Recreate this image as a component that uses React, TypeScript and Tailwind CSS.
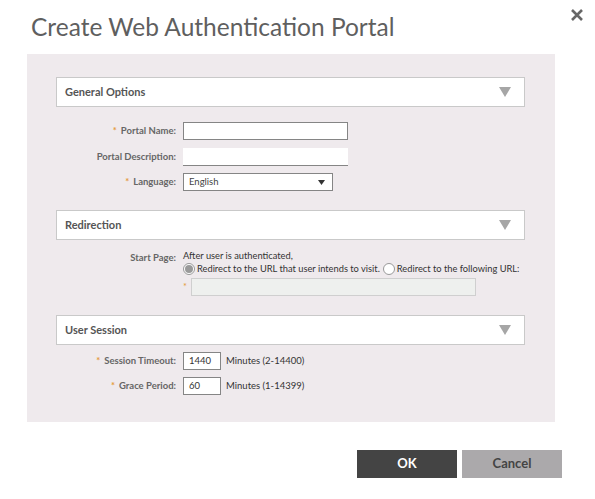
import { ReactNode } from 'react'

function SectionHeader({ title }: { title: string }) {
  return (
    <div className="flex h-[30px] items-center justify-between border border-[#c9c9c9] bg-white pl-[8px] pr-[13px]">
      <span className="text-[11px] font-bold text-[#555]">{title}</span>
      <svg width="12" height="10" viewBox="0 0 12 10">
        <polygon points="0,0 12,0 6,10" fill="#a6a6a6" />
      </svg>
    </div>
  )
}

function Req() {
  return <span className="mr-[4px] text-[#e59a3c]">*</span>
}

function Row({ label, required, children, className }: { label: string; required?: boolean; children: ReactNode; className?: string }) {
  return (
    <div className={`flex items-center ${className ?? ''}`}>
      <div className="w-[120px] shrink-0 text-right text-[9.5px] font-bold text-[#666]">
        {required && <Req />}
        {label}
      </div>
      <div className="ml-[7px] flex items-center">{children}</div>
    </div>
  )
}

function Radio({ checked }: { checked?: boolean }) {
  return (
    <span className="flex h-[12px] w-[12px] shrink-0 items-center justify-center rounded-full border border-[#999] bg-white">
      {checked && <span className="h-[8px] w-[8px] rounded-full bg-[#9a9a9a]" />}
    </span>
  )
}

export default function App() {
  return (
    <div className="relative h-[499px] w-[595px] bg-white font-['Lato',sans-serif] text-[#333]">
      <h1 className="pl-[31px] pt-[11px] text-[24.5px] leading-[32px] text-[#5f5f5f]">Create Web Authentication Portal</h1>
      <button className="absolute right-[11px] top-[8px] text-[#666]">
        <svg width="14" height="14" viewBox="0 0 14 14">
          <path d="M2 2 L12 12 M12 2 L2 12" stroke="#666" strokeWidth="2.6" />
        </svg>
      </button>

      <div className="ml-[27px] mt-[11px] h-[368px] w-[528px] bg-[#efeaed] pl-[29px] pr-[30px] pt-[23px]">
        <SectionHeader title="General Options" />
        <Row label="Portal Name:" required className="mt-[15px]">
          <div className="h-[18px] w-[165px] border border-[#858585] bg-white" />
        </Row>
        <Row label="Portal Description:" className="mt-[8px]">
          <div className="h-[18px] w-[165px] border-b border-[#858585] bg-white" />
        </Row>
        <Row label="Language:" required className="mt-[7px]">
          <div className="flex h-[18px] w-[150px] items-center justify-between border border-[#858585] bg-white pl-[5px] pr-[7px] text-[9.5px] text-[#444]">
            <span>English</span>
            <svg width="7" height="5" viewBox="0 0 7 5">
              <polygon points="0,0 7,0 3.5,5" fill="#333" />
            </svg>
          </div>
        </Row>

        <div className="mt-[19px]">
          <SectionHeader title="Redirection" />
        </div>
        <div className="mt-[10px] flex">
          <div className="w-[120px] shrink-0 pt-[1px] text-right text-[9.5px] font-bold text-[#666]">Start Page:</div>
          <div className="ml-[7px] whitespace-nowrap text-[9.3px] text-[#333]">
            <div className="leading-[12px]">After user is authenticated,</div>
            <div className="mt-[1px] flex items-center leading-[12px]">
              <Radio checked />
              <span className="ml-[2px]">Redirect to the URL that user intends to visit.</span>
              <span className="ml-[3px]">
                <Radio />
              </span>
              <span className="ml-[2px]">Redirect to the following URL:</span>
            </div>
            <div className="mt-[3px] flex items-center">
              <span className="w-[8px] text-[#e59a3c]">*</span>
              <div className="h-[18px] w-[285px] border border-[#cfcfcf] bg-[#eef0ee]" />
            </div>
          </div>
        </div>

        <div className="mt-[19px]">
          <SectionHeader title="User Session" />
        </div>
        <Row label="Session Timeout:" required className="mt-[7px]">
          <div className="flex h-[18px] w-[38px] items-center border border-[#858585] bg-white pl-[5px] text-[9.5px] text-[#333]">1440</div>
          <span className="ml-[5px] text-[9.5px] text-[#333]">Minutes (2-14400)</span>
        </Row>
        <Row label="Grace Period:" required className="mt-[7px]">
          <div className="flex h-[18px] w-[38px] items-center border border-[#858585] bg-white pl-[5px] text-[9.5px] text-[#333]">60</div>
          <span className="ml-[5px] text-[9.5px] text-[#333]">Minutes (1-14399)</span>
        </Row>
      </div>

      <div className="mt-[28px] flex justify-end gap-[5px] pr-[33px]">
        <button className="h-[28px] w-[100px] bg-[#444] text-[13px] font-bold text-white">OK</button>
        <button className="h-[28px] w-[100px] bg-[#aba9ab] text-[13px] font-bold text-[#444]">Cancel</button>
      </div>
    </div>
  )
}
